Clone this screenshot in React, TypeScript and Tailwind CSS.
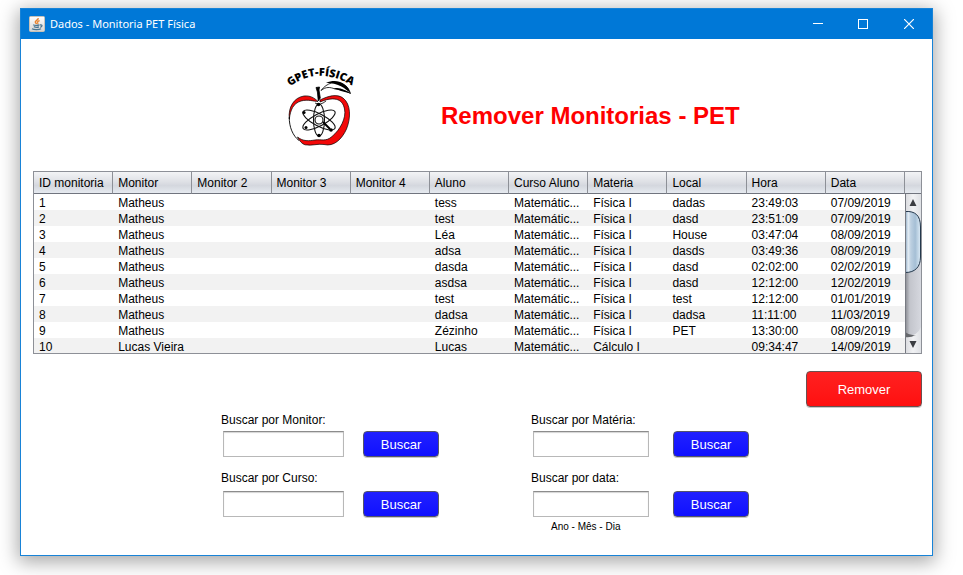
import React from 'react';

const columns = [
  'ID monitoria', 'Monitor', 'Monitor 2', 'Monitor 3', 'Monitor 4', 'Aluno',
  'Curso Aluno', 'Materia', 'Local', 'Hora', 'Data',
];

const rows = [
  ['1', 'Matheus', '', '', '', 'tess', 'Matemátic...', 'Física I', 'dadas', '23:49:03', '07/09/2019'],
  ['2', 'Matheus', '', '', '', 'test', 'Matemátic...', 'Física I', 'dasd', '23:51:09', '07/09/2019'],
  ['3', 'Matheus', '', '', '', 'Léa', 'Matemátic...', 'Física I', 'House', '03:47:04', '08/09/2019'],
  ['4', 'Matheus', '', '', '', 'adsa', 'Matemátic...', 'Física I', 'dasds', '03:49:36', '08/09/2019'],
  ['5', 'Matheus', '', '', '', 'dasda', 'Matemátic...', 'Física I', 'dasd', '02:02:00', '02/02/2019'],
  ['6', 'Matheus', '', '', '', 'asdsa', 'Matemátic...', 'Física I', 'dasd', '12:12:00', '12/02/2019'],
  ['7', 'Matheus', '', '', '', 'test', 'Matemátic...', 'Física I', 'test', '12:12:00', '01/01/2019'],
  ['8', 'Matheus', '', '', '', 'dadsa', 'Matemátic...', 'Física I', 'dadsa', '11:11:00', '11/03/2019'],
  ['9', 'Matheus', '', '', '', 'Zézinho', 'Matemátic...', 'Física I', 'PET', '13:30:00', '08/09/2019'],
  ['10', 'Lucas Vieira', '', '', '', 'Lucas', 'Matemátic...', 'Cálculo I', '', '09:34:47', '14/09/2019'],
];

const headerFill =
  'bg-[linear-gradient(to_bottom,#f3f4f6_0%,#dfe1e6_45%,#d4d7de_65%,#e6eaf0_100%)]';

function JavaIcon() {
  return (
    <svg width="16" height="16" viewBox="0 0 16 16" aria-hidden="true">
      <defs>
        <linearGradient id="tile" x1="0" y1="0" x2="0" y2="1">
          <stop offset="0" stopColor="#ffffff" />
          <stop offset="1" stopColor="#d5d5d5" />
        </linearGradient>
      </defs>
      <rect x="0.5" y="0.5" width="15" height="15" rx="1" fill="url(#tile)" stroke="#c9c2b8" />
      <path d="M9.200 2.200C9.600 4 5.600 4.800 6.400 6.400C6.700 7 7.300 7.300 7.400 8" fill="none" stroke="#e8832e" strokeWidth="1.500" />
      <path d="M10.600 4.600C8.400 5.300 8.200 6 8.800 6.800C9.200 7.400 8.800 7.800 8.500 8.100" fill="none" stroke="#e8832e" strokeWidth="1.200" />
      <path d="M4.200 8.800C5.500 9.700 9 9.500 10.500 8.900M4.800 10.700C6.500 11.400 8.800 11.300 10 10.800M3 12.700C5 13.900 10 13.800 12 12.700M11 9C13.800 8.400 13.400 10.700 11.200 11.300" fill="none" stroke="#4b7590" strokeWidth="1.300" />
    </svg>
  );
}

function Logo() {
  return (
    <svg width="90" height="100" viewBox="0 0 90 100" role="img" aria-label="GPET-Física">
      <defs>
        <path id="arc" d="M15 31.500Q46 8.500 84 35" />
      </defs>
      <text className="fill-black font-['Open_Sans',sans-serif] text-[11px] font-extrabold">
        <textPath href="#arc">GPET-FÍSICA</textPath>
      </text>
      <path d="M41 32.500L44.500 32L44 35L45.300 43L43.300 46L42.400 37Z" fill="#000" stroke="#000" strokeWidth="0.800" />
      <path d="M46 35.500C51 31.500 55 32 60 34C66 34.500 70 35.500 75.500 38.500C74 34 72 31 68 29C61 25.500 52 27.500 46 35.500Z" fill="#fff" stroke="#000" strokeWidth="0.800" />
      <path d="M51 28C57 25 64 25.500 68 28.500C73 31.500 74.500 35 75.500 38.500C70 32.500 61 27 51 28Z" fill="#000" />
      <path d="M58 33Q66 36.500 75.500 38.500Q69 33.500 62 33Z" fill="#000" />
      <path d="M14.300 64C13 52 19 42.500 29 41C35 40.500 39 42.500 43 46.500C39 46.500 33 44 26 46C18 48.500 15.500 55 14.300 64Z" fill="#f20808" stroke="#000" strokeWidth="0.700" />
      <path d="M40 48Q45 51 51 46" fill="none" stroke="#000" strokeWidth="0.800" />
      <path d="M45 45C53 41 62 38.500 68 43C76 49 76 63 71.500 74C67 84 59 92 49 89.500C42 88.500 38 91 30 89.800C27 89 24.500 86 22.500 82C28 86.500 34 86 40 85C46 84 51 87 57 81.500C65 75 71.500 63 69.500 54C67.500 43 58 41.500 45 47Z" fill="#f20808" stroke="#000" strokeWidth="0.700" />
      <path d="M14.300 62C14 72 18 81 24 85.500" fill="none" stroke="#000" strokeWidth="0.900" />
      <g fill="none" stroke="#111" strokeWidth="1.100">
        <ellipse cx="44" cy="65" rx="5.500" ry="16" />
        <ellipse cx="44" cy="65" rx="6" ry="18" transform="rotate(-62 44 65)" />
        <ellipse cx="44" cy="65" rx="6" ry="18" transform="rotate(62 44 65)" />
      </g>
      <circle cx="44" cy="65" r="4" fill="#fff" stroke="#111" strokeWidth="1.100" />
      <g fill="#000">
        <circle cx="43.500" cy="49.500" r="1.800" />
        <circle cx="44" cy="80.500" r="1.800" />
        <circle cx="29" cy="57.500" r="1.600" />
        <circle cx="31" cy="72.500" r="1.500" />
        <circle cx="56" cy="75" r="1.800" />
      </g>
      <path d="M48 67L55 74" stroke="#000" strokeWidth="2" />
    </svg>
  );
}

function ScrollBar() {
  return (
    <svg className="block h-full w-full" viewBox="0 0 16 159" preserveAspectRatio="none" aria-hidden="true">
      <defs>
        <linearGradient id="track">
          <stop offset="0" stopColor="#84868c" />
          <stop offset="0.300" stopColor="#c3c5cc" />
          <stop offset="1" stopColor="#d6d8df" />
        </linearGradient>
        <linearGradient id="thumb">
          <stop offset="0" stopColor="#8fabc4" />
          <stop offset="0.180" stopColor="#e4edf5" />
          <stop offset="0.350" stopColor="#bdd0e1" />
          <stop offset="0.650" stopColor="#a5bfd5" />
          <stop offset="1" stopColor="#dcebf6" />
        </linearGradient>
        <linearGradient id="cap">
          <stop offset="0" stopColor="#d9dade" />
          <stop offset="0.500" stopColor="#f1f2f4" />
          <stop offset="1" stopColor="#dfe1e5" />
        </linearGradient>
      </defs>
      <rect width="16" height="159" fill="url(#track)" />
      <path d="M0 0H16V30Q13 17 0 17Z" fill="url(#cap)" />
      <path d="M0.500 17.500C10 17 15.500 21 15.500 33V63C15.500 73 10 78.500 0.500 78.500Z" fill="url(#thumb)" stroke="#24384c" />
      <path d="M0 142Q12 143 16 133V159H0Z" fill="url(#cap)" />
      <path d="M0 138Q5 142 11 141Q5 144 0 143Z" fill="#66686c" />
      <path d="M0.500 0V159" stroke="#777a82" />
      <path d="M4.500 12L8 5L11.500 12ZM4.500 147L8 154L11.500 147Z" fill="#3b3d42" />
    </svg>
  );
}

type SearchFieldProps = { id: string; label: string; inputWidth: string; gap: string; hint?: string };

function SearchField({ id, label, inputWidth, gap, hint }: SearchFieldProps) {
  return (
    <form className="flex flex-col" onSubmit={(e) => e.preventDefault()}>
      <label htmlFor={id} className={`leading-4 ${gap}`}>{label}</label>
      <div className="flex w-[218px] justify-between pl-0.5">
        <input
          id={id}
          className={`h-[26px] ${inputWidth} border border-[#b8b8b8] border-t-[#8c8c8c] bg-white px-1 shadow-[inset_0_1px_1px_#d4d4d4] outline-none`}
        />
        <button
          type="submit"
          className="h-[26px] w-[76px] rounded border border-[#55556a] bg-linear-to-b from-[#2020ff] to-[#0f0fff] pt-0.5 text-[13px] leading-4 text-white shadow-[0_1px_0_#c8c8c8]"
        >
          Buscar
        </button>
      </div>
      {hint && <p className="pt-1 pl-5 text-[10px] leading-3">{hint}</p>}
    </form>
  );
}

export default function App() {
  return (
    <div className="bg-white pt-2 pr-[30px] pb-[19px] pl-5 font-['Liberation_Sans',Arial,sans-serif] text-xs text-black">
      <div className="border border-[#1883d7] bg-white shadow-[0_4px_18px_2px_rgba(0,0,0,0.35)]">
        <header className="flex h-[30px] items-center bg-[#0078d7] pl-2 text-white">
          <JavaIcon />
          <span className="flex-1 pl-[5px] font-['Noto_Sans','Open_Sans',sans-serif] text-[11px]">
            Dados - Monitoria PET Física
          </span>
          <button type="button" aria-label="Minimizar" className="flex h-full w-[46px] items-center justify-center">
            <svg width="10" height="10" viewBox="0 0 10 10"><path d="M0 4.500H10" stroke="#fff" /></svg>
          </button>
          <button type="button" aria-label="Maximizar" className="flex h-full w-11 items-center justify-center">
            <svg width="10" height="10" viewBox="0 0 10 10"><rect x="0.500" y="0.500" width="9" height="9" fill="none" stroke="#fff" /></svg>
          </button>
          <button type="button" aria-label="Fechar" className="flex h-full w-[47px] items-center justify-center">
            <svg width="10" height="10" viewBox="0 0 10 10"><path d="M0 0L10 10M10 0L0 10" stroke="#fff" strokeWidth="1.200" /></svg>
          </button>
        </header>

        <main className="pr-2.5 pb-[22px] pl-3">
          <div className="flex items-center pt-4 pb-4 pl-[242px]">
            <Logo />
            <h1 className="pt-[22px] pl-[76px] text-2xl font-bold text-[#ff0000]">Remover Monitorias - PET</h1>
          </div>

          <div className="flex h-[183px] overflow-hidden border border-[#8d9097]">
            <div className="min-w-0 flex-1">
              <table className="w-full table-fixed border-separate border-spacing-0">
                <thead>
                  <tr>
                    {columns.map((c) => (
                      <th
                        key={c}
                        scope="col"
                        className={`h-[22px] border-r border-b border-r-[#8d9097] border-b-[#70747e] p-0 pl-[5px] text-left leading-4 font-normal whitespace-nowrap ${headerFill}`}
                      >
                        {c}
                      </th>
                    ))}
                  </tr>
                </thead>
                <tbody>
                  {rows.map((r) => (
                    <tr key={r[0]} className="even:bg-[#f2f2f2]">
                      {r.map((v, i) => (
                        <td key={columns[i]} className="h-4 pt-0.5 pl-[5px] leading-[14px] whitespace-nowrap">{v}</td>
                      ))}
                    </tr>
                  ))}
                </tbody>
              </table>
            </div>
            <div className="flex w-4 flex-col">
              <div className={`h-[22px] border-b border-[#70747e] ${headerFill}`} />
              <div className="h-[159px]">
                <ScrollBar />
              </div>
            </div>
          </div>

          <div className="flex justify-end pt-[17px]">
            <button
              type="button"
              className="h-9 w-[116px] rounded border border-[#6a5050] bg-linear-to-b from-[#ff2020] to-[#ff0f0f] pt-0.5 text-[13px] text-white shadow-[0_1px_0_#c8c8c8]"
            >
              Remover
            </button>
          </div>

          <div className="flex gap-[92px] pt-[5px] pl-[188px]">
            <div className="flex flex-col gap-[13px]">
              <SearchField id="monitor" label="Buscar por Monitor:" inputWidth="w-[121px]" gap="mb-[3px]" />
              <SearchField id="curso" label="Buscar por Curso:" inputWidth="w-[121px]" gap="mb-[5px]" />
            </div>
            <div className="flex flex-col gap-[13px]">
              <SearchField id="materia" label="Buscar por Matéria:" inputWidth="w-[116px]" gap="mb-[3px]" />
              <SearchField id="data" label="Buscar por data:" inputWidth="w-[116px]" gap="mb-[5px]" hint="Ano - Mês - Dia" />
            </div>
          </div>
        </main>
      </div>
    </div>
  );
}
